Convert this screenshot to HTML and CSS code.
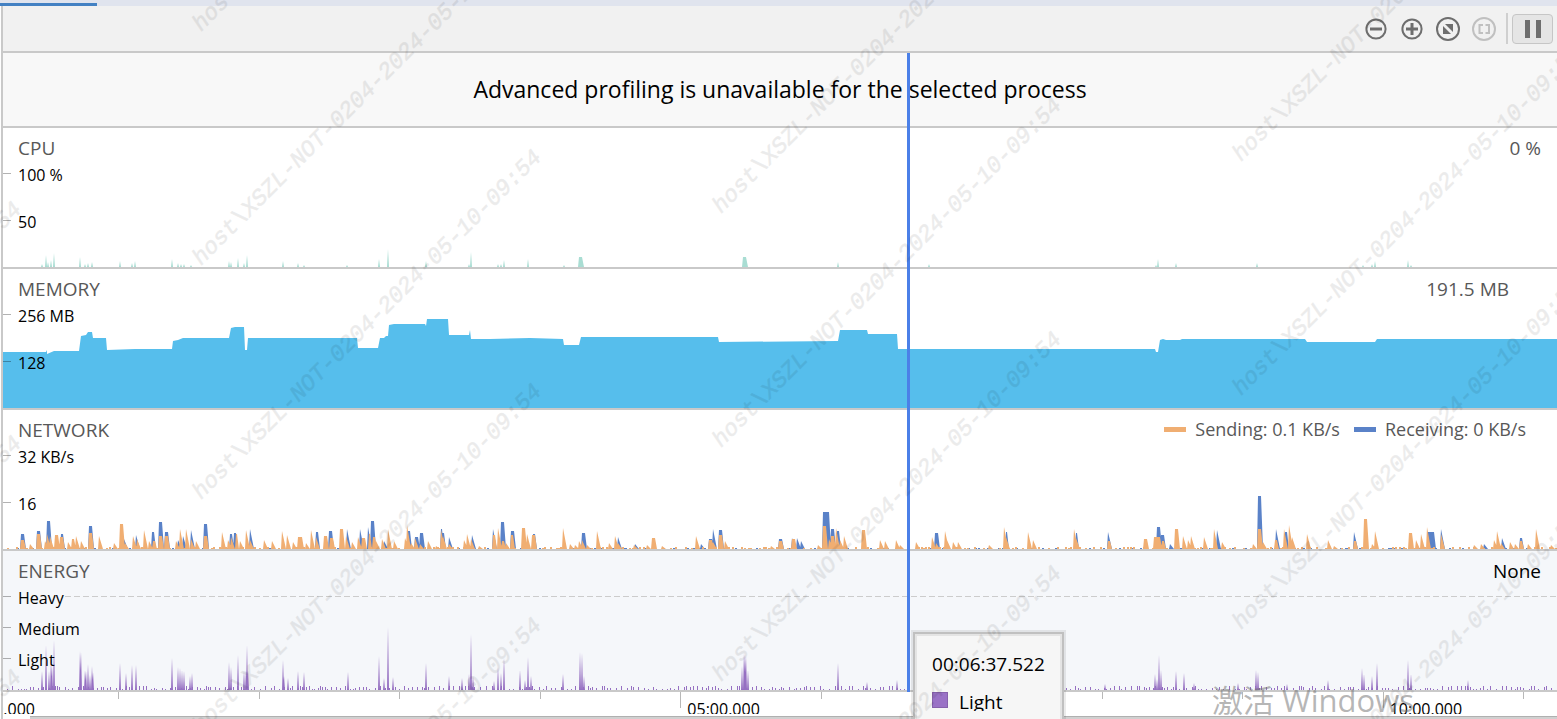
FILE: index.html
```html
<!DOCTYPE html>
<html lang="en">
<head>
    <meta charset="UTF-8">
    <meta name="viewport" content="width=device-width, initial-scale=1.0">
    <title>Profiler</title>
    <link rel="stylesheet" href="styles.css">
</head>
<body>
    <div class="tab-strip"><div class="active-tab"></div></div>

    <div class="profiler">
        <div class="toolbar">
            <button class="icon-button" aria-label="Zoom out">
                <svg viewBox="0 0 24 24"><circle cx="12" cy="12" r="9.6"/><path d="M6 12h12" stroke-width="3"/></svg>
            </button>
            <button class="icon-button" aria-label="Zoom in">
                <svg viewBox="0 0 24 24"><circle cx="12" cy="12" r="9.6"/><path d="M6 12h12M12 6v12" stroke-width="3"/></svg>
            </button>
            <button class="icon-button" aria-label="Reset zoom">
                <svg viewBox="0 0 24 24"><circle cx="12" cy="12" r="11"/><path class="solid" d="M9 7h8v8zM7 9l8 8H7z"/></svg>
            </button>
            <button class="icon-button" aria-label="Zoom to selection" disabled>
                <svg viewBox="0 0 24 24"><circle cx="12" cy="12" r="11"/><path d="M11 8H7.500v8H11M13.500 8h3.500v8H13.500"/></svg>
            </button>
            <div class="separator"></div>
            <button class="pause-button" aria-label="Pause"><span></span><span></span></button>
        </div>

        <div class="monitors">
            <div class="banner">Advanced profiling is unavailable for the selected process</div>

            <section class="lane">
                <svg class="chart" viewBox="0 0 1554 139" preserveAspectRatio="none"><path id="cpu" class="cpu"/></svg>
                <div class="lane-head"><h2>CPU</h2><span class="value">0 %</span></div>
                <ul class="axis"><li>100 %</li><li>50</li></ul>
            </section>

            <section class="lane lane-memory">
                <svg class="chart" viewBox="0 0 1554 139" preserveAspectRatio="none"><path id="memory" class="memory"/></svg>
                <div class="lane-head"><h2>MEMORY</h2><span class="value">191.5 MB</span></div>
                <ul class="axis"><li>256 MB</li><li>128</li></ul>
            </section>

            <section class="lane lane-network">
                <svg class="chart" viewBox="0 0 1554 139" preserveAspectRatio="none">
                    <path id="receiving" class="receiving"/>
                    <path id="sending" class="sending"/>
                </svg>
                <div class="lane-head">
                    <h2>NETWORK</h2>
                    <div class="legend">
                        <span class="key key-sending">Sending: 0.1 KB/s</span>
                        <span class="key key-receiving">Receiving: 0 KB/s</span>
                    </div>
                </div>
                <ul class="axis"><li>32 KB/s</li><li>16</li></ul>
            </section>

            <section class="lane lane-energy">
                <svg class="chart" viewBox="0 0 1554 139" preserveAspectRatio="none">
                    <path class="threshold" d="M62 45.500H1554"/>
                    <path id="energy" class="energy"/>
                </svg>
                <div class="lane-head"><h2>ENERGY</h2><span class="value">None</span></div>
                <ul class="axis"><li>Heavy</li><li>Medium</li><li>Light</li></ul>
            </section>

            <div class="cursor"></div>
        </div>

        <div class="timeline">
            <div class="tick major">00.000</div>
            <div class="tick"></div>
            <div class="tick"></div>
            <div class="tick"></div>
            <div class="tick"></div>
            <div class="tick major">05:00.000</div>
            <div class="tick"></div>
            <div class="tick"></div>
            <div class="tick"></div>
            <div class="tick"></div>
            <div class="tick major">10:00.000</div>
            <div class="tick"></div>
        </div>
        <div class="scrollbar"></div>
    </div>

    <div class="tooltip">
        <div class="tooltip-time">00:06:37.522</div>
        <div class="tooltip-row"><span class="swatch"></span><span class="tooltip-label">Light</span></div>
    </div>

    <div class="activate">激活 Windows</div>
    <svg class="watermark" id="watermark" aria-hidden="true"></svg>

    <script src="script.js"></script>
</body>
</html>
```

FILE: styles.css
```css
* {
    box-sizing: border-box;
}

body {
    margin: 0;
    height: 100vh;
    overflow: hidden;
    position: relative;
    background-color: #FFFFFF;
    color: #000000;
    font-family: "Open Sans", "Noto Sans", "Noto Sans CJK SC", sans-serif;
    font-size: 19px;
}

.tab-strip {
    height: 6px;
    padding-top: 3px;
    background-color: #E0E4EE;
}

.active-tab {
    width: 97px;
    height: 3px;
    background-color: #4381C3;
}

.profiler {
    margin-left: 1px;
    border-left: 2px solid #C9C9C9;
}

.toolbar {
    display: flex;
    align-items: center;
    justify-content: flex-end;
    gap: 12px;
    height: 47px;
    padding-right: 4px;
    background-color: #F1F1F1;
    border-bottom: 2px solid #C9C9C9;
}

.icon-button {
    width: 24px;
    height: 24px;
    padding: 0;
    border: none;
    background: none;
    color: #6E6E6E;
}

.icon-button:disabled {
    color: #C0C0C0;
}

.icon-button svg {
    display: block;
    fill: none;
    stroke: currentColor;
    stroke-width: 2;
}

.icon-button .solid {
    fill: currentColor;
    stroke: none;
}

.separator {
    width: 2px;
    height: 31px;
    margin: 0 -8px 0 -2px;
    background-color: #CFCFCF;
}

.pause-button {
    display: flex;
    align-items: center;
    justify-content: center;
    gap: 6px;
    width: 41px;
    height: 30px;
    padding: 0;
    border: 1px solid #C6C6C6;
    border-radius: 4px;
    background-color: #E5E5E5;
}

.pause-button span {
    width: 5px;
    height: 18px;
    background-color: #6E6E6E;
}

.monitors {
    position: relative;
}

.banner {
    height: 75px;
    line-height: 73px;
    text-align: center;
    font-size: 23px;
    background-color: #F8F8F8;
    border-bottom: 2px solid #C9C9C9;
}

.lane {
    position: relative;
    height: 141px;
    border-bottom: 2px solid #C9C9C9;
}

.lane-energy {
    background-color: #F5F7FA;
}

.chart {
    position: absolute;
    inset: 0;
    width: 100%;
    height: 100%;
}

.cpu {
    fill: #A9DDD3;
}

.memory {
    fill: #56BEEC;
}

.receiving {
    fill: #5A82C8;
}

.sending {
    fill: #F0AE72;
}

.energy {
    fill: #9670C2;
}

.threshold {
    fill: none;
    stroke: #CCCCCC;
    stroke-dasharray: 6 3;
}

.lane-head {
    position: relative;
    display: flex;
    justify-content: space-between;
    height: 38px;
    padding: 0 16px 0 15px;
    line-height: 40px;
    color: #585858;
}

.lane-memory .lane-head {
    padding-right: 48px;
}

.lane-network .lane-head {
    padding-right: 31px;
}

.lane-energy .value {
    color: #000000;
}

h2 {
    margin: 0;
    font-size: 19px;
    font-weight: normal;
}

.legend {
    display: flex;
    gap: 14px;
    font-size: 18px;
}

.key {
    display: flex;
    align-items: center;
    gap: 9px;
}

.key::before {
    content: "";
    width: 22px;
    height: 5px;
}

.key-sending::before {
    background-color: #F0AE72;
}

.key-receiving::before {
    background-color: #5A82C8;
}

.axis {
    position: relative;
    margin: 0;
    padding: 0;
    list-style: none;
    font-size: 16px;
    line-height: 18px;
}

.axis li {
    position: relative;
    height: 47px;
    padding-left: 15px;
}

.lane-energy .axis li {
    height: 31px;
}

.axis li::before {
    content: "";
    position: absolute;
    left: 0;
    top: 7px;
    width: 8px;
    height: 1px;
    background-color: rgba(0, 0, 0, 0.3);
}

.cursor {
    position: absolute;
    left: 58.2%;
    top: 0;
    bottom: 0;
    width: 3px;
    background-color: #4B80E8;
}

.timeline {
    display: flex;
    height: 22px;
    overflow: hidden;
    font-size: 16px;
    line-height: 34px;
}

.tick {
    display: flex;
    flex: 0 0 9.04%;
    gap: 6px;
    white-space: nowrap;
}

.tick:first-child {
    margin-left: -25px;
}

.tick::before {
    content: "";
    flex: none;
    width: 1px;
    height: 7px;
    background-color: #B8B8B8;
}

.major::before {
    height: 16px;
}

.scrollbar {
    height: 3px;
    margin: 2px 0 0 27px;
    background-color: #D0D0D0;
    border-top: 1px solid #B0B0B0;
}

.tooltip {
    position: absolute;
    left: 58.9%;
    top: 636px;
    width: 143px;
    height: 100px;
    padding: 14px 15px;
    background-color: #F6F6F6;
    box-shadow: 0 0 0 2px #E4E4E4, 0 0 0 4px #C0C0C0, 0 0 0 6px rgba(0, 0, 0, 0.08);
    line-height: 28px;
}

.tooltip-row {
    display: flex;
    align-items: center;
    gap: 11px;
    height: 19px;
    margin-top: 14px;
}

.swatch {
    width: 16px;
    height: 16px;
    margin-bottom: 4px;
    background-color: #9A72C6;
    border: 1px solid #8661AC;
}

/* the popup cuts the descenders off */
.tooltip-label {
    height: 19px;
    line-height: 20px;
    overflow: hidden;
}

.activate {
    position: absolute;
    left: 1212px;
    bottom: 0;
    font-size: 31px;
    line-height: 38px;
    color: rgba(110, 110, 110, 0.5);
}

.watermark {
    position: absolute;
    inset: 0;
    width: 100%;
    height: 100%;
    pointer-events: none;
    font-family: "Liberation Mono", monospace;
    font-size: 23px;
    font-style: italic;
    fill: #000000;
    stroke: #000000;
    stroke-width: 0.6;
    opacity: 0.075;
}
```

FILE: script.js
```js
const BASE = 139;

// each entry is x,height or x,height,plateau width
const cpu = "39,3 43,12 45,5 48,7 51,14 77,10 82,3 85,4 89,5 117,6 129,4 132,6 169,8 175,4 178,3 181,3 188,2 226,6 228,5 235,9 241,4 244,12 280,6 295,4 301,2 344,2 376,8 385,18 423,6 466,3 468,15 495,3 498,3 501,7 525,8 561,2 576,10,3 740,10,3 835,5 926,3 1153,2 1155,8 1173,4 1254,4 1360,2 1369,3 1372,6 1405,7 1408,2";

const receiving = "18,15,3 34,18,3 44,28,3 58,15,2 86,23,3 121,10 133,14 149,17,2 156,27,3 162,17,3 175,9 180,13 188,19 201,25,3 227,15,2 231,16,2 247,20 313,17,2 326,18,3 344,20 357,20 365,22 368,28,3 381,8 405,18,2 412,12,3 417,16,3 438,20,1 439,16,2 446,12 469,14 490,20 498,27,3 508,18,3 530,15,2 579,16,3 615,12 632,5 698,5 706,10,3 710,20 716,19,3 776,10,3 789,11 794,11 798,8 820,37,6 828,20,3 834,18,2 932,16,3 1003,17,1 1073,16,1 1105,17 1154,22,3 1158,14,3 1167,5 1214,19 1255,53,3 1273,20 1282,17,2 1351,17 1425,17,6 1438,20 1481,5 1499,11 1517,11,2";

const sending = "18,9,3 27,5 34,15,3 42,8 44,15 47,13 52,14,3 57,12,3 65,7 69,10,2 73,13 78,8 86,16,3 96,13 111,6 117,25,3 122,6 130,13 134,10 141,19 146,8 150,8,2 156,13,3 162,13,3 173,8 177,20 183,20 188,10 193,8 201,13,3 219,17 225,9 228,12 233,15,1 237,8 243,19 247,9 261,9 269,8 279,18 284,14 290,7 295,12,4 303,6 308,19 313,12 321,13,3 327,11,3 337,20,3 343,13 349,7 355,12 359,11,3 366,15,1 370,12,2 373,8 379,10 385,20 391,8 402,11 404,24 408,6 412,11 417,5 425,8 433,3 438,19 440,13 446,5 461,9 464,15 468,10 476,3 490,14,2 495,21 499,8,2 503,6 508,14,2 519,21,3 524,15 529,14,3 560,21 567,5 572,4 576,8 579,9 584,4 594,18 606,6 612,13 615,6 631,4 644,4 649,11,3 659,3 693,13 706,9,3 710,7 716,14,3 722,8 768,3 776,8,3 789,10,3 815,4 820,23,3 826,10 828,13,3 833,21 837,9 841,13 859,19,3 877,9 882,8 893,9 897,4 913,7 929,12 933,6 942,18 944,9 950,7 955,7 986,4 1001,22 1003,12 1025,17 1030,9 1071,20 1073,11 1105,8,2 1141,10,3 1151,12,6 1159,8,2 1172,20,3 1180,13 1185,9 1188,13 1201,12 1211,20 1219,7 1250,5 1255,20,3 1260,7 1272,9,2 1281,20 1286,24 1289,12 1304,15 1325,9 1331,3 1351,8,2 1361,30,3 1369,5 1372,18 1406,16,3 1413,9 1418,15 1424,22 1438,15 1471,4 1478,5 1491,9 1494,18 1498,6 1507,7 1512,5 1517,8,2 1525,5 1533,20 1548,4";

const energy = "39,19 43,45 46,19 48,30 49,24 51,50 77,39 78,38 82,20 83,19 85,26 87,15 89,24 90,18 117,27 123,17 129,25 133,25 169,32 175,23 177,22 179,20 181,19 187,14 189,17 226,28 228,23 235,35 241,19 243,20 244,45 245,20 280,30 281,14 285,12 295,19 301,18 345,18 376,34 381,12 385,63 390,13 423,27 446,14 459,12 466,16 468,56 470,14 491,9 495,23 498,17 501,32 517,20 522,10 525,33 528,14 560,16 577,38 579,37 581,14 739,24 741,37 742,36 743,34 745,20 835,27 864,8 894,10 1102,6 1152,16 1154,11 1156,35 1158,20 1173,19 1181,17 1191,7 1235,7 1253,20 1255,18 1284,6 1325,10 1359,22 1361,16 1369,14 1374,27 1405,30 1408,16 1465,10";

const memory = [
    [0, 83], [43, 83], [44, 81], [44, 85], [51, 82], [76, 82], [78, 67], [83, 66], [85, 63], [89, 63],
    [90, 69], [103, 69], [104, 81], [132, 80], [169, 80], [170, 72], [175, 71], [180, 69], [226, 69],
    [228, 59], [232, 58], [241, 58], [242, 81], [244, 81], [245, 69], [354, 69], [355, 79], [375, 79],
    [377, 69], [381, 69], [383, 67], [385, 67], [386, 56], [391, 55], [422, 55], [423, 57], [424, 50],
    [445, 50], [446, 66], [466, 66], [467, 61], [468, 70], [487, 70], [527, 69], [560, 70], [561, 76],
    [576, 76], [578, 68], [715, 68], [716, 73], [835, 72], [837, 61], [864, 61], [865, 65], [894, 65],
    [895, 80], [1152, 80], [1153, 83], [1155, 83], [1157, 71], [1160, 70], [1163, 71], [1177, 71],
    [1179, 70], [1302, 70], [1304, 73], [1372, 73], [1374, 70], [1554, 70]
];

function spikePath(data, rise, fall) {
    return data.split(" ").map(item => {
        const [x, h, plateau = 0] = item.split(",").map(Number);
        const tail = plateau ? 2 : fall;
        return `M${x - rise} ${BASE}L${x} ${BASE - h}h${plateau}L${x + plateau + tail} ${BASE}z`;
    }).join("");
}

// low background activity along the baseline
function noisePath(step, max, width) {
    let path = "";
    let seed = 7;
    for (let x = 4; x < 1554; x += 2 + seed % step) {
        seed = (seed * 137 + 29) % 1009;
        const h = 1 + seed % max;
        path += `M${x} ${BASE}v${-h}h${width}v${h}z`;
    }
    return path;
}

function draw(id, path) {
    document.getElementById(id).setAttribute("d", path);
}

draw("cpu", spikePath(cpu, 1, 1));
draw("memory", "M0 139L" + memory.join(" ") + "V139z");
draw("receiving", spikePath(receiving, 1, 4) + noisePath(14, 1, 2));
draw("sending", spikePath(sending, 1, 4) + noisePath(9, 2, 2));
draw("energy", spikePath(energy, 1, 1) + noisePath(5, 4, 1));

function drawWatermark() {
    let marks = "";
    for (let col = -1; col < 4; col++) {
        for (let row = -2; row < 5; row++) {
            const x = 201 + col * 520;
            const y = 266 - col * 52 + row * 234;
            marks += `<text transform="translate(${x} ${y}) rotate(-45)">host\\XSZL-NOT-0204-2024-05-10-09:54</text>`;
        }
    }
    document.getElementById("watermark").innerHTML = marks;
}

drawWatermark();
```
